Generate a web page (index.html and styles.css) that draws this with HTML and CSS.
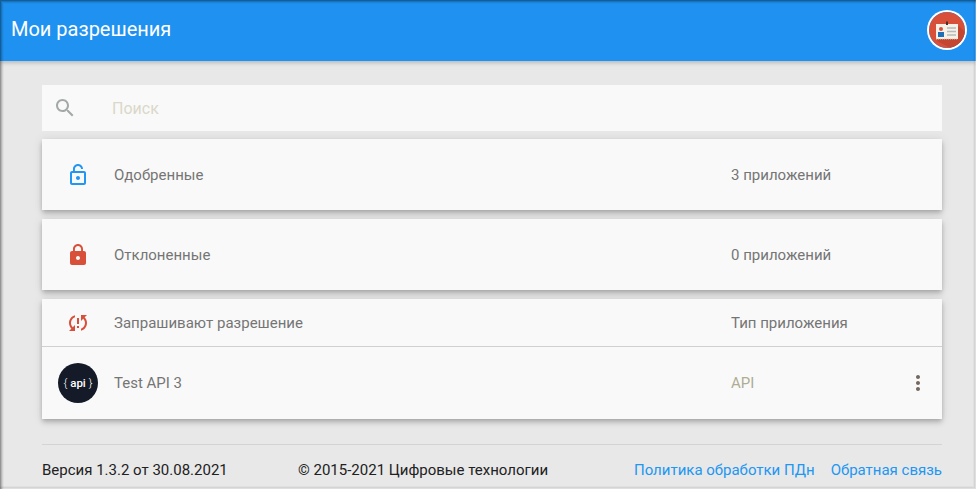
FILE: index.html
```html
<!DOCTYPE html>
<html lang="ru">
<head>
<meta charset="utf-8">
<title>Мои разрешения</title>
<link rel="stylesheet" href="styles.css">
</head>
<body>
<div class="app">
  <header class="topbar">
    <h1 class="title">Мои разрешения</h1>
    <div class="avatar">
      <svg viewBox="0 0 36 36" width="36" height="36">
        <circle cx="18" cy="18" r="18" fill="#d9503a"/>
        <path d="M8 29 L30 14 L36 20 A18 18 0 0 1 21 35.800Z" fill="#c44631"/>
        <rect x="7" y="12" width="22" height="15" fill="#f6f1e7"/>
        <path d="M7 27h22" stroke="#d8c9b5" stroke-width="1" stroke-dasharray="1 1"/>
        <rect x="17" y="9.500" width="2" height="3.500" fill="#4a3028"/>
        <circle cx="12" cy="17" r="2" fill="#d9503a"/>
        <rect x="9" y="20" width="6" height="5" fill="#1e6fb5"/>
        <path d="M18 16h9M18 19.500h9M18 23h9" stroke="#b4b9ba" stroke-width="1.300"/>
      </svg>
    </div>
  </header>
  <main class="content">
    <div class="search">
      <svg class="search-icon" viewBox="0 0 24 24" width="24" height="24">
        <path fill="#a3a9a6" d="M15.500 14h-.79l-.28-.27C15.410 12.590 16 11.110 16 9.500 16 5.910 13.090 3 9.500 3S3 5.910 3 9.500 5.910 16 9.500 16c1.610 0 3.090-.59 4.230-1.570l.27.28v.79l5 4.990L20.490 19l-4.990-5zm-6 0C7.010 14 5 11.990 5 9.500S7.010 5 9.500 5 14 7.010 14 9.500 11.990 14 9.500 14z"/>
      </svg>
      <span class="search-text">Поиск</span>
    </div>
    <section class="card row-tall">
      <div class="cell-icon">
        <svg class="flip" viewBox="0 0 24 24" width="24" height="24">
          <path fill="#2196f3" d="M12 17c1.100 0 2-.9 2-2s-.9-2-2-2-2 .9-2 2 .9 2 2 2zm6-9h-1V6c0-2.760-2.240-5-5-5S7 3.240 7 6h1.900c0-1.710 1.390-3.100 3.100-3.100 1.710 0 3.100 1.390 3.100 3.100v2H6c-1.100 0-2 .9-2 2v10c0 1.100.9 2 2 2h12c1.100 0 2-.9 2-2V10c0-1.100-.9-2-2-2zm0 12H6V10h12v10z"/>
        </svg>
      </div>
      <span class="cell-name">Одобренные</span>
      <span class="cell-info">3 приложений</span>
    </section>
    <section class="card row-tall">
      <div class="cell-icon">
        <svg viewBox="0 0 24 24" width="24" height="24">
          <path fill="#d9503a" d="M18 8h-1V6c0-2.760-2.240-5-5-5S7 3.240 7 6v2H6c-1.100 0-2 .9-2 2v10c0 1.100.9 2 2 2h12c1.100 0 2-.9 2-2V10c0-1.100-.9-2-2-2zm-6 9c-1.100 0-2-.9-2-2s.9-2 2-2 2 .9 2 2-.9 2-2 2zm3.100-9H8.900V6c0-1.710 1.390-3.100 3.100-3.100 1.710 0 3.100 1.390 3.100 3.100v2z"/>
        </svg>
      </div>
      <span class="cell-name">Отклоненные</span>
      <span class="cell-info">0 приложений</span>
    </section>
    <section class="card card-list">
      <div class="list-head">
        <div class="cell-icon">
          <svg viewBox="0 0 24 24" width="24" height="24">
            <path fill="#d9503a" d="M3 12c0 2.210.91 4.200 2.360 5.640L3 20h6v-6l-2.240 2.240C5.680 15.150 5 13.660 5 12c0-2.610 1.670-4.830 4-5.650V4.260C5.550 5.150 3 8.270 3 12zm8 5h2v-2h-2v2zM21 4h-6v6l2.240-2.240C18.320 8.850 19 10.340 19 12c0 2.610-1.670 4.830-4 5.650v2.090c3.450-.89 6-4.010 6-7.740 0-2.210-.91-4.200-2.360-5.640L21 4zm-10 9h2V7h-2v6z"/>
          </svg>
        </div>
        <span class="cell-name">Запрашивают разрешение</span>
        <span class="cell-info">Тип приложения</span>
      </div>
      <div class="list-row">
        <div class="cell-icon">
          <div class="api-logo"><span class="brace">{</span><span class="api-word">api</span><span class="brace">}</span></div>
        </div>
        <span class="cell-name">Test API 3</span>
        <span class="cell-type">API</span>
        <svg class="dots" viewBox="0 0 24 24" width="24" height="24">
          <path fill="#75685e" d="M12 8c1.100 0 2-.9 2-2s-.9-2-2-2-2 .9-2 2 .9 2 2 2zm0 2c-1.100 0-2 .9-2 2s.9 2 2 2 2-.9 2-2-.9-2-2-2zm0 6c-1.100 0-2 .9-2 2s.9 2 2 2 2-.9 2-2-.9-2-2-2z"/>
        </svg>
      </div>
    </section>
    <footer class="footer">
      <span class="version">Версия 1.3.2 от 30.08.2021</span>
      <span class="copy">© 2015-2021 Цифровые технологии</span>
      <span class="links"><a href="#">Политика обработки ПДн</a><a href="#">Обратная связь</a></span>
    </footer>
  </main>
  <div class="frame"></div>
</div>
</body>
</html>
```
FILE: styles.css
```css
* { box-sizing: border-box; }
html, body { margin: 0; height: 100%; }
body {
  width: 976px;
  height: 489px;
  overflow: hidden;
  background: #e8e8e8;
  font-family: Roboto, "Noto Sans", sans-serif;
}
.app {
  height: 489px;
  background: #e8e8e8;
  display: flex;
  flex-direction: column;
  position: relative;
}
.frame {
  position: absolute;
  inset: 0;
  pointer-events: none;
  box-shadow:
    inset 1px 1px 0 rgba(0,0,0,.18),
    inset 2px 2px 0 rgba(0,0,0,.12),
    inset 3px 3px 0 rgba(0,0,0,.07),
    inset 4px 4px 0 rgba(0,0,0,.03),
    inset -1px -1px 0 rgba(255,255,255,.25),
    inset -2px -2px 0 rgba(0,0,0,.05),
    inset -3px -3px 0 rgba(0,0,0,.03);
}
.topbar {
  height: 61px;
  padding: 0 9px 3px 12px;
  background: #1f92f1;
  box-shadow: 0 2px 4px rgba(0,0,0,.2);
  display: flex;
  align-items: center;
  justify-content: space-between;
  position: relative;
}
.title {
  margin: 0 0 0 -1px;
  font-size: 20px;
  font-weight: 400;
  color: #fff;
}
.avatar {
  width: 36px;
  height: 36px;
  border-radius: 50%;
  box-shadow: 0 0 0 2px #fff;
  overflow: hidden;
  margin-right: 2px;
  margin-top: 1px;
  display: flex;
}
.content {
  flex: 1;
  padding: 24px 34px 0 42px;
  display: flex;
  flex-direction: column;
}
.search {
  height: 46px;
  background: #f9f9f9;
  display: flex;
  align-items: center;
  padding-left: 11px;
  margin-bottom: 8px;
}
.search-text {
  margin-left: 35px;
  font-size: 16px;
  color: #d9d8c9;
}
.card {
  background: #f9f9f9;
  box-shadow: 0 2px 4px -1px rgba(0,0,0,.17), 0 4px 5px rgba(0,0,0,.12), 0 1px 10px rgba(0,0,0,.1);
  font-size: 15px;
  color: #757575;
}
.row-tall {
  height: 71px;
  margin-bottom: 9px;
  display: flex;
  align-items: center;
}
.cell-icon {
  width: 72px;
  display: flex;
  justify-content: center;
  flex: none;
}
.flip { transform: scaleX(-1); }
.cell-name { width: 617px; flex: none; }
.cell-info { flex: none; }
.card-list { height: 120px; }
.list-head {
  height: 48px;
  display: flex;
  align-items: center;
  border-bottom: 1px solid #d0d0d0;
}
.list-row {
  height: 72px;
  display: flex;
  align-items: center;
  position: relative;
}
.api-logo {
  width: 40px;
  height: 40px;
  border-radius: 50%;
  background: #141a27;
  color: #fff;
  font-size: 11.500px;
  display: flex;
  align-items: center;
  justify-content: center;
  gap: 3px;
}
.brace { font-weight: 300; }
.api-word { font-weight: 500; }
.cell-type { color: #adad95; }
.dots {
  position: absolute;
  right: 12px;
  top: 24px;
}
.footer {
  margin-top: 25px;
  border-top: 1px solid #d4d4d4;
  padding-top: 16px;
  display: flex;
  font-size: 15px;
  color: #212121;
}
.version { width: 256px; }
.copy { width: 336px; }
.links { flex: 1; display: flex; justify-content: flex-end; gap: 16px; white-space: nowrap; }
.links a { color: #2196f3; text-decoration: none; }
```
